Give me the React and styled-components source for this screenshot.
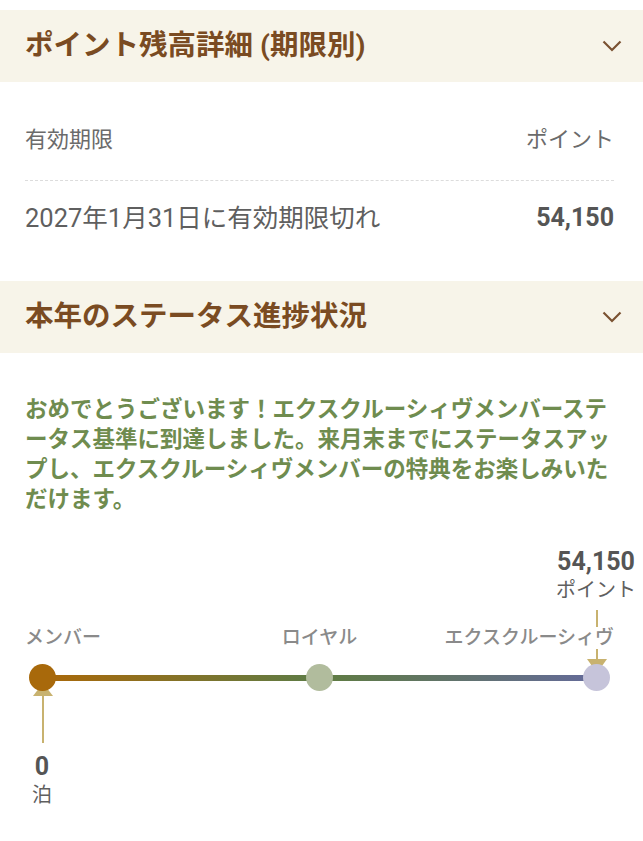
import React from 'react';
import styled, { createGlobalStyle } from 'styled-components';

const GlobalStyle = createGlobalStyle`
  body {
    margin: 0;
    background: #ffffff;
    font-family: Roboto, "Noto Sans CJK JP", sans-serif;
  }
`;

const tiers = [
  { name: 'メンバー', color: '#a8690b', align: 'start' },
  { name: 'ロイヤル', color: '#b1bc9d', align: 'center' },
  { name: 'エクスクルーシィヴ', color: '#c6c4da', align: 'end' },
];

// バーの色（左から右へ）
const bars = [
  ['#a8690b', '#5f7b44'],
  ['#5f7b44', '#646b96'],
];

function Chevron() {
  return (
    <svg width="20" height="12" viewBox="0 0 20 12" fill="none">
      <path d="M1.5 1.5 L10 10 L18.5 1.5" stroke="#7a5232" strokeWidth="2.2" />
    </svg>
  );
}

function App() {
  return (
    <>
      <GlobalStyle />
      <Page>
        <SectionHeader>
          <SectionTitle>ポイント残高詳細 (期限別)</SectionTitle>
          <Chevron />
        </SectionHeader>
        <BalanceTable>
          <TableHead>
            <HeadCell>有効期限</HeadCell>
            <HeadCell>ポイント</HeadCell>
          </TableHead>
          <TableRow>
            <DateCell>2027年1月31日に有効期限切れ</DateCell>
            <AmountCell>54,150</AmountCell>
          </TableRow>
        </BalanceTable>

        <SectionHeader>
          <SectionTitle>本年のステータス進捗状況</SectionTitle>
          <Chevron />
        </SectionHeader>
        <StatusBody>
          <Message>
            おめでとうございます！エクスクルーシィヴメンバーステータス基準に到達しました。来月末までにステータスアップし、エクスクルーシィヴメンバーの特典をお楽しみいただけます。
          </Message>

          <Progress>
            <CurrentRow>
              <ValueBlock>
                <ValueNumber>54,150</ValueNumber>
                <ValueUnit>ポイント</ValueUnit>
              </ValueBlock>
            </CurrentRow>

            <LabelRow>
              {tiers.map(t => (
                <TierLabel key={t.name} $align={t.align}>{t.name}</TierLabel>
              ))}
            </LabelRow>

            <Track>
              {tiers.map((t, i) => (
                <React.Fragment key={t.name}>
                  <NodeWrap>
                    {i === 2 && (
                      <PointerUp width="22" height="63" viewBox="0 0 22 63">
                        <line x1="11" y1="0" x2="11" y2="50" stroke="#c8b26f" strokeWidth="2" />
                        <polygon points="1,49 21,49 11,63" fill="#c8b26f" />
                      </PointerUp>
                    )}
                    {i === 0 && (
                      <PointerDown width="22" height="60" viewBox="0 0 22 60">
                        <polygon points="11,0 1,13 21,13" fill="#c8b26f" />
                        <line x1="11" y1="12" x2="11" y2="60" stroke="#c8b26f" strokeWidth="2" />
                      </PointerDown>
                    )}
                    <Dot $color={t.color} />
                  </NodeWrap>
                  {i < bars.length && <Bar $from={bars[i][0]} $to={bars[i][1]} />}
                </React.Fragment>
              ))}
            </Track>

            <StartRow>
              <StartBlock>
                <ValueNumber>0</ValueNumber>
                <ValueUnit>泊</ValueUnit>
              </StartBlock>
            </StartRow>
          </Progress>
        </StatusBody>
      </Page>
    </>
  );
}

export default App;

const Page = styled.div`
  width: 643px;
  padding-top: 10px;
  padding-bottom: 30px;
`;

const SectionHeader = styled.div`
  height: 72px;
  display: flex;
  align-items: center;
  justify-content: space-between;
  padding: 0 21px 0 25px;
  background: #f7f4e9;
`;

const SectionTitle = styled.h2`
  margin: 0;
  color: #7a4b22;
  font-size: 28.5px;
  font-weight: 700;
  line-height: 1;
  white-space: nowrap;
`;

const BalanceTable = styled.div`
  padding: 43px 29px 46px 25px;
`;

const TableHead = styled.div`
  display: flex;
  justify-content: space-between;
  align-items: center;
  padding-bottom: 25px;
  border-bottom: 1px dashed #dcdcdc;
`;

const HeadCell = styled.div`
  color: #6b6b6b;
  font-size: 22px;
  line-height: 30px;
`;

const TableRow = styled.div`
  display: flex;
  justify-content: space-between;
  align-items: center;
  padding-top: 20px;
`;

const DateCell = styled.div`
  color: #5f5f5f;
  font-size: 25.5px;
  line-height: 34px;
`;

const AmountCell = styled.div`
  color: #555555;
  font-size: 25px;
  font-weight: 700;
  line-height: 34px;
`;

const StatusBody = styled.div`
  padding: 41px 29px 0 25px;
`;

const Message = styled.p`
  margin: 0;
  color: #6f8c4f;
  font-size: 22.5px;
  font-weight: 700;
  line-height: 30px;
  line-break: anywhere;
`;

const Progress = styled.div`
  margin-top: 34px;
  display: flex;
  flex-direction: column;
`;

const CurrentRow = styled.div`
  display: flex;
  justify-content: flex-end;
  margin-right: -22px;
`;

const ValueBlock = styled.div`
  width: 80px;
  display: flex;
  flex-direction: column;
  align-items: center;
`;

const ValueNumber = styled.div`
  color: #555555;
  font-size: 25px;
  font-weight: 700;
  line-height: 28px;
`;

const ValueUnit = styled.div`
  color: #5f5f5f;
  font-size: 20px;
  line-height: 28px;
`;

const LabelRow = styled.div`
  margin-top: 23px;
  display: grid;
  grid-template-columns: 1fr auto 1fr;
`;

const TierLabel = styled.div`
  position: relative;
  z-index: 2;
  justify-self: ${p => p.$align};
  background: #ffffff;
  color: #8a8a8a;
  font-size: 19px;
  font-weight: 500;
  line-height: 22px;
`;

const Track = styled.div`
  margin-top: 15px;
  padding: 0 4px;
  display: flex;
  align-items: center;
`;

const NodeWrap = styled.div`
  position: relative;
  width: 27px;
  height: 27px;
  flex-shrink: 0;
`;

const Dot = styled.div`
  position: relative;
  z-index: 1;
  width: 27px;
  height: 27px;
  border-radius: 50%;
  background: ${p => p.$color};
`;

const Bar = styled.div`
  flex: 1;
  height: 6px;
  margin: 0 -2px;
  background: linear-gradient(to right, ${p => p.$from}, ${p => p.$to});
`;

const PointerUp = styled.svg`
  position: absolute;
  left: 50%;
  bottom: calc(100% - 8.5px);
  transform: translateX(-50%);
  display: block;
`;

const PointerDown = styled.svg`
  position: absolute;
  left: 50%;
  top: calc(100% - 8.5px);
  transform: translateX(-50%);
  display: block;
`;

const StartRow = styled.div`
  margin-top: 62px;
  display: flex;
`;

const StartBlock = styled.div`
  width: 28px;
  margin-left: 3px;
  display: flex;
  flex-direction: column;
  align-items: center;
`;
